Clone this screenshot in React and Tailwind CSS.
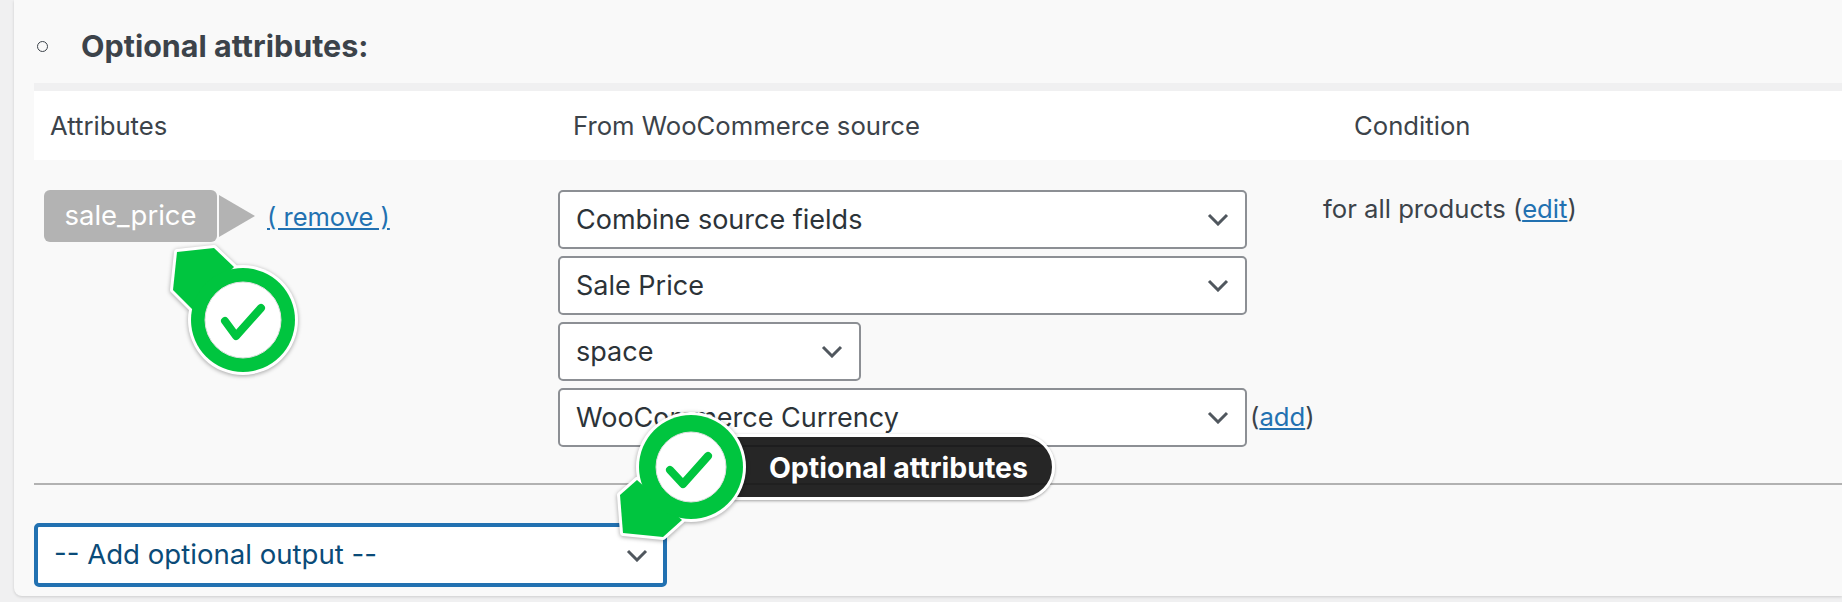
import React from "react";

function Chevron() {
  return (
    <svg width="22" height="13" viewBox="0 0 22 13" fill="none" className="shrink-0">
      <path d="M2 2 L11 11 L20 2" stroke="#50575e" strokeWidth="3" />
    </svg>
  );
}

function Select({ label, className = "" }) {
  return (
    <div className={`flex h-[59px] items-center justify-between rounded-[5px] border-2 border-[#8c8f94] bg-white pl-4 pr-[16px] text-[#2c3338] ${className}`}>
      <span className="pt-[2px]">{label}</span>
      <Chevron />
    </div>
  );
}

function Marker({ box, tail, c, r, inner, check, className }) {
  const [x, y, w, h] = box;
  return (
    <svg
      viewBox={`${x} ${y} ${w} ${h}`}
      width={w}
      height={h}
      className={`absolute drop-shadow-[0_1px_2px_rgba(0,0,0,0.35)] ${className}`}
    >
      <polygon points={tail} fill="#fff" stroke="#fff" strokeWidth="6" strokeLinejoin="round" />
      <circle cx={c[0]} cy={c[1]} r={r + 3} fill="#fff" />
      <polygon points={tail} fill="#00c53f" />
      <circle cx={c[0]} cy={c[1]} r={r} fill="#00c53f" />
      <circle cx={c[0]} cy={c[1]} r={inner} fill="#fff" stroke="#e0e0e0" strokeWidth="1" />
      <polyline points={check} fill="none" stroke="#00c53f" strokeWidth="8" strokeLinecap="round" strokeLinejoin="round" />
    </svg>
  );
}

export default function App() {
  return (
    <div className="relative h-[602px] w-full overflow-hidden bg-[#f0f0f1] pl-[14px] font-['Inter','Liberation_Sans',sans-serif] text-[27px] text-[#3c434a]">
      <div className="h-[596px] rounded-bl-lg bg-[#f9f9f9] pl-5 shadow-[0_1px_3px_rgba(0,0,0,0.15)]">
        <div className="flex h-[83px] items-center pt-[9px]">
          <span className="ml-[3px] inline-block size-[11px] rounded-full border border-[#3c434a]"></span>
          <h2 className="ml-[33px] text-[30.5px] font-bold">Optional attributes:</h2>
        </div>

        <div className="flex h-[77px] items-center border-t-8 border-[#f0f0f1] bg-white pt-[2px] text-[25.7px]">
          <div className="w-[539px] pl-[16px]">Attributes</div>
          <div className="w-[781px]">From WooCommerce source</div>
          <div>Condition</div>
        </div>

        <div className="flex h-[325px] border-b-2 border-[#b2b2b2] pt-[30px]">
          <div className="flex w-[524px] items-start pl-[10px]">
            <div className="flex h-[52px] w-[173px] items-center justify-center rounded-md bg-[#b3b3b3] text-[27.5px] text-white">sale_price</div>
            <svg width="36" height="42" viewBox="0 0 36 42" className="ml-[2px] mt-[5px]">
              <polygon points="0,0 36,21 0,42" fill="#b3b3b3" />
            </svg>
            <a href="#" className="ml-3 mt-[8px] whitespace-pre text-[25.5px] text-[#2271b1] underline">( remove )</a>
          </div>
          <div className="flex w-[765px] flex-col gap-[7px]">
            <Select label="Combine source fields" className="w-[689px]" />
            <Select label="Sale Price" className="w-[689px]" />
            <Select label="space" className="w-[303px]" />
            <div className="flex items-center">
              <Select label="WooCommerce Currency" className="w-[689px]" />
              <span className="ml-[3px] text-[25.7px]">(<a href="#" className="text-[#2271b1] underline">add</a>)</span>
            </div>
          </div>
          <div className="text-[25.7px] leading-[37px]">for all products (<a href="#" className="text-[#2271b1] underline">edit</a>)</div>
        </div>

        <div className="pt-[38px]">
          <div className="flex h-[64px] w-[633px] items-center justify-between rounded-[5px] border-4 border-[#2271b1] bg-white pl-[16px] pr-[15px] text-[27.6px] text-[#0a4b78]">
            <span>-- Add optional output --</span>
            <Chevron />
          </div>
        </div>
      </div>

      <div className="absolute left-[700px] top-[434px] flex h-[66px] w-[355px] items-center justify-end rounded-full border-[3px] border-white bg-[#131313]/92 pr-[24px] pt-[2px] text-[28.5px] font-bold text-white shadow-[0_1px_3px_rgba(0,0,0,0.35)]">
        Optional attributes
      </div>

      <Marker
        box={[160, 240, 145, 140]}
        className="left-[160px] top-[240px]"
        tail="177,252 214,248 234,267 193,310 173,290"
        c={[243, 320]}
        r={52}
        inner={38}
        check="225,321 236,336 261,308"
      />
      <Marker
        box={[610, 405, 145, 140]}
        className="left-[610px] top-[405px]"
        tail="620,495 623,533 663,537 682,520 637,480"
        c={[691, 467]}
        r={52}
        inner={35}
        check="670,470 683,484 708,456"
      />
    </div>
  );
}
